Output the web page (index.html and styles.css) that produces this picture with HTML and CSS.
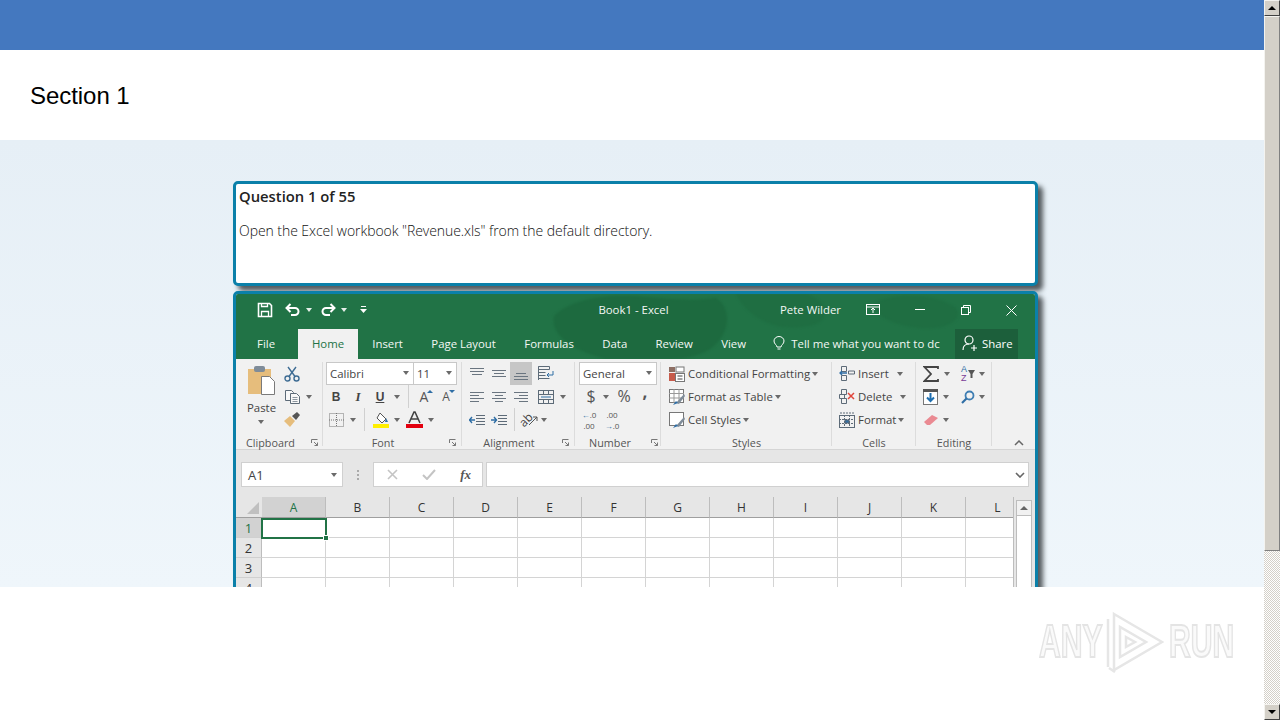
FILE: index.html
```html
<!DOCTYPE html>
<html lang="en">
<head>
<meta charset="utf-8">
<title>Section 1</title>
<link rel="stylesheet" href="styles.css">
</head>
<body>
<div class="page">
  <div class="content">
    <header class="topbar"></header>
    <div class="section-band"><h1 class="section-title">Section 1</h1></div>
    <main class="stage">
      <section class="card question">
        <h2 class="q-title">Question 1 of 55</h2>
        <p class="q-text">Open the Excel workbook "Revenue.xls" from the default directory.</p>
      </section>
      <section class="card excel">
        <div class="banner">
          <svg class="blobs" width="798" height="65" viewBox="0 0 798 65"><path d="M318 22c14-14 44-22 80-20 30 2 56 6 82 2 16 10 14 34-2 48-12 10-30 13-44 13h-64c-30-8-56-22-52-43z" fill="#1d6a3f"/><path d="M500 0h70c20 6 26 22 10 30-24 8-62 4-80-30z" fill="#1f6e42"/><path d="M640 8c24-10 60-8 80 6 8 12-10 22-36 20-24-2-48-12-44-26z" fill="#1f6e42"/></svg>
          <div class="titlebar">
            <div class="qat">
              <span class="tool w24"><svg width="16" height="16" viewBox="0 0 16 16" fill="none" stroke="#fff" stroke-width="1.6"><path d="M1.5 1.5h11l2 2v11h-13z"/><path d="M4.5 14.5v-5h7v5M4.5 1.5v3h6v-3" stroke-width="1.3"/></svg></span>
              <span class="tool w24 qat-gap"><svg width="16" height="14" viewBox="0 0 16 14" fill="none" stroke="#fff" stroke-width="2"><path d="M1.5 5h8.500a3.500 3.500 0 0 1 0 7H6"/><path d="M5.500 1 1.500 5l4 4"/></svg></span>
              <span class="w8 tool"><i class="caret white"></i></span>
              <span class="tool w24 qat-gap2"><svg width="16" height="14" viewBox="0 0 16 14" fill="none" stroke="#fff" stroke-width="2"><path d="M14.500 5H6a3.500 3.500 0 0 0 0 7h4"/><path d="M10.500 1l4 4-4 4"/></svg></span>
              <span class="w8 tool"><i class="caret white"></i></span>
              <span class="tool w12 qat-gap3"><svg width="7" height="8" viewBox="0 0 7 8" fill="#fff"><rect x="1" y="0" width="5" height="1"/><path d="M0 3h7L3.500 7z"/></svg></span>
            </div>
            <div class="doc-title">Book1 - Excel</div>
            <div class="user">Pete Wilder</div>
            <span class="tool w24 win"><svg width="14" height="12" viewBox="0 0 14 12" fill="none" stroke="#fff"><rect x=".5" y=".5" width="13" height="10"/><path d="M.5 3h13M7 9V4.500M5 6l2-2 2 2"/></svg></span>
            <span class="tool w46 win"><svg width="10" height="2" viewBox="0 0 10 2"><rect width="10" height="1" fill="#fff"/></svg></span>
            <span class="tool w46 win"><svg width="10" height="10" viewBox="0 0 10 10" fill="none" stroke="#fff"><rect x=".5" y="2.500" width="7" height="7"/><path d="M2.500 2.500v-2h7v7h-2"/></svg></span>
            <span class="tool w46 win"><svg width="11" height="11" viewBox="0 0 11 11" stroke="#fff"><path d="M.5.500l10 10M10.500.500l-10 10"/></svg></span>
          </div>
          <nav class="tabs">
            <span class="tab">File</span>
            <span class="tab active">Home</span>
            <span class="tab">Insert</span>
            <span class="tab">Page Layout</span>
            <span class="tab">Formulas</span>
            <span class="tab">Data</span>
            <span class="tab">Review</span>
            <span class="tab">View</span>
            <span class="tell"><svg width="12" height="15" viewBox="0 0 12 15" fill="none" stroke="#fff"><path d="M4 11c0-2-3-3-3-6a5 4.500 0 0 1 10 0c0 3-3 4-3 6zM4.500 13h3"/></svg><span class="tell-text">Tell me what you want to dc</span></span>
            <span class="share"><svg width="16" height="16" viewBox="0 0 16 16" fill="none" stroke="#fff" stroke-width="1.200"><circle cx="7" cy="5" r="4"/><path d="M1 15c0-4 2-6 6-6M9 13h6M12 10v6"/></svg>Share</span>
          </nav>
        </div>
        <div class="ribbon">
          <div class="group g-clip">
            <div class="g-body clip-body">
              <div class="paste">
                <svg width="30" height="30" viewBox="0 0 30 30"><rect x="1" y="4" width="23" height="25" fill="#e6bd7c"/><rect x="7" y="1" width="11" height="6" rx="2" fill="#7f8c99"/><path d="M14.500 11.500h8l5 5v13h-13z" fill="#fff" stroke="#7a7a7a"/></svg>
                <span class="paste-label">Paste</span>
                <i class="caret paste-caret"></i>
              </div>
              <div class="clip-tools">
                <span class="row"><span class="tool w22"><svg width="16" height="16" viewBox="0 0 16 16" fill="none" stroke="#3f6d94" stroke-width="1.400"><circle cx="3.500" cy="12.500" r="2.500"/><circle cx="12.500" cy="12.500" r="2.500"/><path d="M5 10.500 12 1M11 10.500 4 1"/></svg></span></span>
                <span class="row"><span class="tool w22"><svg width="15" height="14" viewBox="0 0 15 14" fill="#f8f8f8" stroke="#5d6b78"><path d="M.5.500h6l2 2v8h-8z"/><path d="M5.500 3.500h6l3 3v7h-9z"/><path d="M7.500 7.500h5M7.500 9.500h5M7.500 11.500h5" stroke-width=".7"/></svg></span><span class="tool w12"><i class="caret"></i></span></span>
                <span class="row"><span class="tool w22"><svg width="16" height="15" viewBox="0 0 16 15"><path d="M0 9l6-5 5 5-5 6z" fill="#e6bd7c"/><path d="M8 4l5-4 3 3-4 5z" fill="#555"/></svg></span></span>
              </div>
            </div>
            <div class="g-foot"><span class="g-label lab-clip">Clipboard</span><span class="launch"><svg width="7" height="7" viewBox="0 0 7 7" fill="none" stroke="#777"><path d="M.5 4V.500H6.500M6.500 6.500 3 3M3.500 6.500h3v-3"/></svg></span></div>
          </div>
          <div class="group g-font">
            <div class="g-body">
              <div class="row">
                <span class="sp3"></span>
                <span class="select w88">Calibri<i class="caret"></i></span>
                <span class="select w43">11<i class="caret"></i></span>
              </div>
              <div class="row">
                <span class="sp2"></span>
                <span class="tool w22 fmt bold">B</span>
                <span class="tool w22 fmt ital">I</span>
                <span class="tool w22 fmt under">U</span>
                <span class="tool w12"><i class="caret"></i></span>
                <span class="tool w10"><i class="vsep"></i></span>
                <span class="tool w22 grow">A<i class="tri up"></i></span>
                <span class="tool w22 shrink">A<i class="tri down"></i></span>
              </div>
              <div class="row">
                <span class="sp2"></span>
                <span class="tool w22"><svg width="15" height="14" viewBox="0 0 15 14" fill="none" stroke="#777" stroke-dasharray="1 1"><rect x=".5" y=".5" width="14" height="13"/><path d="M7.500 0v14M0 7h15"/></svg></span>
                <span class="tool w12"><i class="caret"></i></span>
                <span class="tool w10"><i class="vsep"></i></span>
                <span class="tool w22 gap1"><svg width="17" height="17" viewBox="0 0 17 17"><path d="M7 2l6 6-4 4-5-5z" fill="#fff" stroke="#555"/><path d="M13 7l2 4-3 0z" fill="#2f6ea5"/><rect x="0" y="13" width="16" height="4" fill="#ffef00"/></svg></span>
                <span class="tool w10"><i class="caret"></i></span>
                <span class="tool w22 gap1"><svg width="17" height="17" viewBox="0 0 17 17"><path d="M3 12 8 1h1l5 11M5 8h7" fill="none" stroke="#444" stroke-width="1.600"/><rect y="13" width="17" height="4" fill="#e3000f"/></svg></span>
                <span class="tool w12"><i class="caret"></i></span>
              </div>
            </div>
            <div class="g-foot"><span class="g-label lab-font">Font</span><span class="launch"><svg width="7" height="7" viewBox="0 0 7 7" fill="none" stroke="#777"><path d="M.5 4V.500H6.500M6.500 6.500 3 3M3.500 6.500h3v-3"/></svg></span></div>
          </div>
          <div class="group g-align">
            <div class="g-body">
              <div class="row">
                <span class="sp4"></span>
                <span class="tool w22"><svg class="lines" width="14" height="12" viewBox="0 0 14 12"><path d="M0 .5h14M0 3.500h14M2 6.500h10"/></svg></span>
                <span class="tool w22"><svg class="lines" width="14" height="10" viewBox="0 0 14 10"><path d="M0 1.500h14M2 4.500h10M0 7.500h14"/></svg></span>
                <span class="tool w22 pressed"><svg class="lines" width="14" height="12" viewBox="0 0 14 12"><path d="M2 5.500h10M0 8.500h14M0 11.500h14"/></svg></span>
                <span class="sp3"></span>
                <span class="tool w22"><svg width="16" height="15" viewBox="0 0 16 15" fill="none" stroke="#5d6b78"><path d="M.5.500h11v3H.5zM.5 6.500h7M.5 9.500h7M.5 12.500h11M.5 14V.500"/><path d="M15 5v4H9M11 7 9 9l2 2" stroke="#2f6ea5"/></svg></span>
              </div>
              <div class="row">
                <span class="sp4"></span>
                <span class="tool w22"><svg class="lines" width="14" height="10" viewBox="0 0 14 10"><path d="M0 .5h14M0 3.500h9M0 6.500h14M0 9.500h9"/></svg></span>
                <span class="tool w22"><svg class="lines" width="14" height="10" viewBox="0 0 14 10"><path d="M0 .5h14M3 3.500h8M0 6.500h14M3 9.500h8"/></svg></span>
                <span class="tool w22"><svg class="lines" width="14" height="10" viewBox="0 0 14 10"><path d="M0 .5h14M5 3.500h9M0 6.500h14M5 9.500h9"/></svg></span>
                <span class="sp3"></span>
                <span class="tool w22"><svg width="16" height="14" viewBox="0 0 16 14" fill="none" stroke="#5d6b78"><rect x=".5" y=".5" width="15" height="13"/><path d="M0 4.500h16M0 9.500h16M5.500 0v4M10.500 0v4M5.500 10v4M10.500 10v4"/><path d="M3 7h10" stroke="#2f6ea5"/></svg></span>
                <span class="tool w12"><i class="caret"></i></span>
              </div>
              <div class="row">
                <span class="sp4"></span>
                <span class="tool w22"><svg width="16" height="10" viewBox="0 0 16 10" fill="none" stroke="#5d6b78"><path d="M7 .5h9M7 3.500h9M7 6.500h9M7 9.500h9"/><path d="M6 5H0M3 2 .5 5 3 8" stroke="#2f6ea5" stroke-width="1.400"/></svg></span>
                <span class="tool w22"><svg width="16" height="10" viewBox="0 0 16 10" fill="none" stroke="#5d6b78"><path d="M7 .5h9M7 3.500h9M7 6.500h9M7 9.500h9"/><path d="M0 5h6M3 2l2.500 3L3 8" stroke="#2f6ea5" stroke-width="1.400"/></svg></span>
                <span class="tool w8"><i class="vsep"></i></span>
                <span class="tool w22 orient"><span class="ab">ab</span><svg class="ab-arrow" width="9" height="9" viewBox="0 0 9 9" fill="none" stroke="#555"><path d="M0 9l8-8M4 1h4v4"/></svg></span>
                <span class="tool w8"><i class="caret"></i></span>
              </div>
            </div>
            <div class="g-foot"><span class="g-label lab-align">Alignment</span><span class="launch"><svg width="7" height="7" viewBox="0 0 7 7" fill="none" stroke="#777"><path d="M.5 4V.500H6.500M6.500 6.500 3 3M3.500 6.500h3v-3"/></svg></span></div>
          </div>
          <div class="group g-num">
            <div class="g-body">
              <div class="row"><span class="sp4"></span><span class="select w78">General<i class="caret"></i></span></div>
              <div class="row">
                <span class="sp5"></span>
                <span class="tool w22 sym">$</span>
                <span class="tool w8"><i class="caret"></i></span>
                <span class="sp3"></span>
                <span class="tool w22 sym">%</span>
                <span class="tool w20 comma">,</span>
              </div>
              <div class="row">
                <span class="sp3"></span>
                <span class="tool w22 dec"><span class="dec-l"><b class="arr">←</b>.0</span><span class="dec-l">.00</span></span>
                <span class="sp1"></span>
                <span class="tool w22 dec"><span class="dec-l">.00</span><span class="dec-l"><b class="arr">→</b>.0</span></span>
              </div>
            </div>
            <div class="g-foot"><span class="g-label lab-num">Number</span><span class="launch"><svg width="7" height="7" viewBox="0 0 7 7" fill="none" stroke="#777"><path d="M.5 4V.500H6.500M6.500 6.500 3 3M3.500 6.500h3v-3"/></svg></span></div>
          </div>
          <div class="group g-styles">
            <div class="g-body">
              <div class="row lbl-row"><span class="tool w20"><svg width="16" height="16" viewBox="0 0 16 16"><rect x="0" y="1" width="6" height="5" fill="#8d6e63"/><rect y="7" width="6" height="8" fill="#c75b4b"/><rect x="7" y="1" width="8" height="5" fill="#fff" stroke="#777"/><rect x="6.500" y="7.500" width="9" height="8" fill="#fff" stroke="#777"/><path d="M8.500 10h5M8.500 13h5" stroke="#444"/></svg></span><span class="rb-text">Conditional Formatting</span><i class="caret mini"></i></div>
              <div class="row lbl-row"><span class="tool w20"><svg width="16" height="16" viewBox="0 0 16 16"><rect x=".5" y=".5" width="14" height="13" fill="#fff" stroke="#777"/><path d="M0 4.500h15M5 0v14M10 0v14M0 9h15" stroke="#999"/><path d="M7 14 15 5l1 2-6 8z" fill="#7f8c99"/><path d="M4 16l3-4 2 2z" fill="#2f6ea5"/></svg></span><span class="rb-text">Format as Table</span><i class="caret mini"></i></div>
              <div class="row lbl-row"><span class="tool w20"><svg width="16" height="16" viewBox="0 0 16 16"><rect x=".5" y=".5" width="14" height="13" fill="#fff" stroke="#777"/><path d="M7 14 15 5l1 2-6 8z" fill="#7f8c99"/><path d="M4 16l3-4 2 2z" fill="#2f6ea5"/></svg></span><span class="rb-text">Cell Styles</span><i class="caret mini"></i></div>
            </div>
            <div class="g-foot"><span class="g-label lab-full">Styles</span></div>
          </div>
          <div class="group g-cells">
            <div class="g-body">
              <div class="row lbl-row"><span class="tool w20"><svg width="16" height="15" viewBox="0 0 16 15" fill="none" stroke="#5d6b78"><path d="M2.500.5h5v5h-5zM2.500 9.500h5v5h-5zM9.500 5h6v3h-6z"/><path d="M8 7H1M3 5 1 7l2 2" stroke="#2f6ea5" stroke-width="1.300"/></svg></span><span class="rb-text">Insert</span><span class="tool w14 cell-car1"><i class="caret"></i></span></div>
              <div class="row lbl-row"><span class="tool w20"><svg width="16" height="15" viewBox="0 0 16 15" fill="none" stroke="#5d6b78"><path d="M2.500.5h5v5h-5zM.5 5.500h5v4h-5zM2.500 9.500h5v5h-5z"/><path d="M9 4l6 6M15 4l-6 6" stroke="#e0463c" stroke-width="1.500"/></svg></span><span class="rb-text">Delete</span><span class="tool w14 cell-car2"><i class="caret"></i></span></div>
              <div class="row lbl-row"><span class="tool w20"><svg width="16" height="16" viewBox="0 0 16 16" fill="none" stroke="#5d6b78"><rect x=".5" y="3.500" width="15" height="12"/><path d="M0 7.500h16M0 11.500h16M5.500 3v13M10.500 3v13M1 1h14" stroke-dasharray="2 1"/><rect x="6" y="8" width="4" height="3" fill="#2f6ea5"/></svg></span><span class="rb-text">Format</span><i class="caret mini"></i></div>
            </div>
            <div class="g-foot"><span class="g-label lab-full">Cells</span></div>
          </div>
          <div class="group g-edit">
            <div class="g-body">
              <div class="row"><span class="sp5"></span><span class="tool w20"><svg width="16" height="16" viewBox="0 0 16 16" fill="none" stroke="#444" stroke-width="1.800"><path d="M15 3V1H1.500L8 8l-6.500 7H15v-2"/></svg></span><span class="tool w12"><i class="caret"></i></span><span class="sp6"></span><span class="tool w18 sort"><span class="az"><b class="az-a">A</b><b class="az-z">Z</b></span><svg width="7" height="8" viewBox="0 0 7 8"><path d="M0 0h7L4.500 4v4h-2V4z" fill="#555"/></svg></span><span class="tool w10"><i class="caret"></i></span></div>
              <div class="row"><span class="sp5"></span><span class="tool w20"><svg width="16" height="16" viewBox="0 0 16 16"><rect x=".5" y=".5" width="14" height="15" fill="#fff" stroke="#777"/><rect width="15" height="3" fill="#555"/><path d="M7.500 4v8M4 8.500l3.500 3.500L11 8.500" fill="none" stroke="#1f6fb0" stroke-width="2"/></svg></span><span class="tool w10"><i class="caret"></i></span><span class="sp8"></span><span class="tool w18"><svg width="14" height="14" viewBox="0 0 14 14" fill="none"><circle cx="8.500" cy="5.500" r="4" stroke="#3f7eb3" stroke-width="1.800"/><path d="M5.500 8.500 1 13" stroke="#2f6ea5" stroke-width="2.200"/></svg></span><span class="tool w10"><i class="caret"></i></span></div>
              <div class="row"><span class="sp5"></span><span class="tool w20"><svg width="15" height="12" viewBox="0 0 15 12"><path d="M0 8l8-7 6 3-8 7H3z" fill="#ea8a92"/></svg></span><span class="tool w10"><i class="caret"></i></span></div>
            </div>
            <div class="g-foot"><span class="g-label lab-full">Editing</span></div>
          </div>
          <div class="collapse"><svg width="10" height="6" viewBox="0 0 10 6" fill="none" stroke="#666" stroke-width="1.500"><path d="M1 5l4-4 4 4"/></svg></div>
        </div>
        <div class="fbar">
          <div class="namebox">A1<i class="caret"></i></div>
          <div class="fdots"><i></i><i></i><i></i></div>
          <div class="fbtns">
            <svg width="11" height="11" viewBox="0 0 11 11" stroke="#c4c4c4" stroke-width="1.600"><path d="M1 1l9 9M10 1l-9 9"/></svg>
            <svg width="14" height="11" viewBox="0 0 14 11" fill="none" stroke="#c4c4c4" stroke-width="2"><path d="M1 6l4 4 8-9"/></svg>
            <span class="fx">fx</span>
          </div>
          <div class="finput"><svg width="10" height="6" viewBox="0 0 10 6" fill="none" stroke="#666" stroke-width="1.600"><path d="M1 1l4 4 4-4"/></svg></div>
        </div>
        <div class="sheet">
          <div class="sheet-grid">
            <div class="corner"><i></i></div>
            <div class="ch sel">A</div><div class="ch">B</div><div class="ch">C</div><div class="ch">D</div><div class="ch">E</div><div class="ch">F</div><div class="ch">G</div><div class="ch">H</div><div class="ch">I</div><div class="ch">J</div><div class="ch">K</div><div class="ch">L</div>
            <div class="rh sel">1</div><div class="c active-cell"><i class="handle"></i></div><div class="c"></div><div class="c"></div><div class="c"></div><div class="c"></div><div class="c"></div><div class="c"></div><div class="c"></div><div class="c"></div><div class="c"></div><div class="c"></div><div class="c"></div>
            <div class="rh">2</div><div class="c"></div><div class="c"></div><div class="c"></div><div class="c"></div><div class="c"></div><div class="c"></div><div class="c"></div><div class="c"></div><div class="c"></div><div class="c"></div><div class="c"></div><div class="c"></div>
            <div class="rh">3</div><div class="c"></div><div class="c"></div><div class="c"></div><div class="c"></div><div class="c"></div><div class="c"></div><div class="c"></div><div class="c"></div><div class="c"></div><div class="c"></div><div class="c"></div><div class="c"></div>
            <div class="rh">4</div><div class="c"></div><div class="c"></div><div class="c"></div><div class="c"></div><div class="c"></div><div class="c"></div><div class="c"></div><div class="c"></div><div class="c"></div><div class="c"></div><div class="c"></div><div class="c"></div>
          </div>
          <div class="vscroll"><div class="vs-up"><i class="tri-up"></i></div></div>
        </div>
      </section>
    </main>
    <div class="foot-band">
      <div class="watermark" aria-label="ANY RUN">
        <span class="wm-text wm-any">ANY</span>
        <svg class="wm-logo" width="58" height="62" viewBox="0 0 58 62" fill="none" stroke="#e6e6e6" stroke-width="2.500"><path d="M2 8v48M8 3l48 28L8 59zM14 16v30l26-15zM3 57l6 4M20 26v10l9-5z"/></svg>
        <span class="wm-text wm-run">RUN</span>
      </div>
    </div>
  </div>
  <aside class="scrollbar">
    <div class="sb-btn"><i class="sb-up"></i></div>
    <div class="sb-thumb"></div>
    <div class="sb-track"></div>
    <div class="sb-btn"><i class="sb-down"></i></div>
  </aside>
</div>
</body>
</html>
```
FILE: styles.css
```css
*{box-sizing:border-box}
html,body{margin:0;padding:0;height:720px;overflow:hidden;background:#fff}
body{font-family:"Open Sans","Noto Sans",sans-serif}
.page{display:flex;width:1280px;height:720px}
.content{width:1264px;display:flex;flex-direction:column}
.topbar{height:50px;background:#4478bf;flex:none}
.section-band{height:90px;flex:none;background:#fff;display:flex;align-items:center;padding-left:30px}
.section-title{margin:0;font:400 24px/28px "Liberation Sans",Arial,sans-serif;color:#000;letter-spacing:-.05px;padding-top:1px}
.stage{height:447px;flex:none;overflow:hidden;background:linear-gradient(#e6eff6,#eff6fb);padding:41px 0 0 233px}
.card{width:805px;border:3px solid #0b80a9;border-radius:5px;box-shadow:5px 5px 5px #555c60;background:#fff}
.question{height:105px;padding:2px 0 0 3px;color:#111}
.q-title{margin:0;font:600 14.800px/20px "Open Sans",sans-serif;color:#222}
.q-text{margin:15px 0 0;font:300 14px/20px "Open Sans",sans-serif;color:#111;letter-spacing:-.06px}
.excel{margin-top:5px;height:320px;overflow:hidden;background:#e6e6e6;border-radius:5px 5px 0 0;font-size:11.400px;color:#444}

.banner{position:relative;height:65px;background:#217346;overflow:hidden}
.blobs{position:absolute;left:0;top:0;filter:blur(1px)}
.titlebar{position:relative;height:35px;color:#fff;display:flex;align-items:center;padding:0 0 3px 17px}
.qat{display:flex;align-items:center;width:313px}
.qat-gap{margin-left:4px}
.qat-gap2{margin-left:3px}
.qat-gap3{margin-left:9px}
.doc-title{width:139px;text-align:center;font-size:11.400px;color:#f3f7f4;margin-left:-2px;padding-bottom:1px}
.user{margin-left:77px;width:82px;font-size:11.400px;color:#f3f7f4;padding-bottom:1px}
.win{height:32px}
.win.w24{margin-left:-1px}
.win.w24+.win.w46{margin-left:12px}
.win:last-child{width:46px;margin-left:-1px}

.tabs{position:relative;height:30px;display:flex;align-items:stretch;color:#f3f7f4;font-size:11.400px}
.tab{display:flex;align-items:center;padding:0 14.200px 2px;white-space:nowrap}
.tab:first-child{padding-left:21px;padding-right:23px}
.tab.active{background:#f1f1f1;color:#217346;padding:0 14px 2px 14px;width:60px;justify-content:center}
.tell{display:flex;align-items:center;gap:6px;margin-left:13px;padding-bottom:2px;width:172px;flex:none}
.tell-text{white-space:nowrap}
.share{position:absolute;left:719px;top:0;bottom:0;width:63px;background:#1c5f3b;display:flex;align-items:center;gap:4px;padding:0 0 2px 7px;color:#fff}

.ribbon{height:91px;background:#f1f1f1;display:flex;border-bottom:1px solid #d5d5d5;font-size:11.400px;color:#444}
.group{display:flex;flex-direction:column;position:relative;flex:none}
.group::after{content:"";position:absolute;right:0;top:3px;bottom:3px;width:1px;background:#dcdcdc}
.g-clip{width:87px}
.g-font{width:139px}
.g-align{width:113px}
.g-num{width:86px}
.g-styles{width:171px}
.g-cells{width:84px}
.g-edit{width:76px}
.g-body{height:75px;padding-top:3px;flex:none}
.g-foot{height:15px;display:flex;align-items:center;font-size:11px;color:#555;flex:none;padding-top:1px}
.g-label{text-align:center;white-space:nowrap;font-size:10.800px}
.lab-clip{width:69px}
.lab-font{width:120px}
.lab-align{width:94px}
.lab-num{width:70px}
.lab-full{width:100%}
.launch{display:flex;margin-left:6px}
.row{display:flex;align-items:center;height:23px}
.tool{display:flex;align-items:center;justify-content:center;height:23px;flex:none}
.w8{width:8px}.w10{width:10px}.w12{width:12px}.w14{width:14px}.w18{width:18px}.w20{width:20px}.w22{width:22px}.w24{width:24px}.w46{width:46px}.w43{width:43px}.w78{width:78px}.w88{width:88px}
.sp1{width:1px}.sp2{width:2px}.sp3{width:3px}.sp4{width:4px}.sp5{width:5px}.sp6{width:6px}.sp8{width:8px}
.gap1{margin-left:1px}
.caret{display:block;width:0;height:0;border:3px solid transparent;border-top:4px solid #6a6a6a;border-bottom:0}
.caret.white{border-top-color:#e6efe9}
.caret.mini{margin-left:2px}
.clip-body{display:flex}
.paste{width:45px;padding-left:11px;display:flex;flex-direction:column;align-items:flex-start;position:relative}
.paste svg{margin-top:3px}
.paste-label{margin:4px 0 0 0;font-size:11.400px;line-height:17px;color:#444}
.paste-caret{margin:4px 0 0 11px}
.clip-tools{display:flex;flex-direction:column}
.select{display:flex;align-items:center;justify-content:space-between;height:23px;background:#fff;border:1px solid #c8c8c8;padding:0 4px 1px 3px;font-size:11.400px;color:#444;flex:none}
.select+.select{border-left:0}
.fmt{font:700 12px "Liberation Sans",sans-serif;color:#444}
.ital{font:italic 700 13px "Liberation Serif",serif}
.under{text-decoration:underline}
.vsep{display:block;width:1px;height:23px;background:#d0d0d0}
.grow,.shrink{position:relative;font:400 14px "Open Sans",sans-serif;color:#555}
.shrink{font-size:12px}
.tri{position:absolute;right:2px;width:0;height:0;border-left:3px solid transparent;border-right:3px solid transparent}
.tri.up{top:5px;border-bottom:3px solid #2f6ea5}
.tri.down{top:5px;border-top:3px solid #2f6ea5}
.lines{stroke:#6a7580;fill:none}
.pressed{background:#c6c6c6}
.orient{position:relative}
.ab{font:400 12px/12px "Open Sans",sans-serif;color:#444;transform:rotate(-45deg);margin-right:6px}
.ab-arrow{position:absolute;right:2px;top:8px}
.sym{font-size:16px;color:#555;padding-bottom:2px}
.comma{font-weight:700;font-size:17px;color:#555;padding-bottom:10px}
.dec{flex-direction:column;font:400 8px/11px "Open Sans",sans-serif;color:#555}
.dec-l{display:block;height:11px;white-space:nowrap}
.arr{color:#2f6ea5;font-weight:400}
.lbl-row{padding-left:6px}
.rb-text{margin-left:1px;white-space:nowrap;font-size:11.400px;color:#444;padding-bottom:1px}
.g-cells .lbl-row{padding-left:5px}
.cell-car1{margin-left:4px}
.cell-car2{margin-left:4px}
.az{display:flex;flex-direction:column;font:700 9px/9px "Liberation Sans",sans-serif;margin-right:1px}
.az-a{color:#2f6ea5;font-weight:400}
.az-z{color:#7a3b97;font-weight:400}
.collapse{width:42px;display:flex;align-items:flex-end;justify-content:center;padding:0 0 3px 12px}

.fbar{height:47px;background:#e6e6e6;display:flex;padding:12px 0 0 5px}
.namebox{width:102px;height:25px;background:#fff;border:1px solid #d0d0d0;display:flex;align-items:center;justify-content:space-between;padding:0 5px 0 6px;font-size:13px;color:#444}
.fdots{width:30px;height:25px;display:flex;flex-direction:column;align-items:center;justify-content:center;gap:2px}
.fdots i{width:2px;height:2px;background:#aaa;display:block}
.fbtns{width:110px;height:25px;background:#fff;border:1px solid #d0d0d0;display:flex;align-items:center;justify-content:space-between;padding:0 11px 0 13px}
.fx{font:italic 700 13px "Liberation Serif",serif;color:#555}
.finput{width:543px;height:25px;margin-left:3px;background:#fff;border:1px solid #d0d0d0;display:flex;align-items:center;justify-content:flex-end;padding-right:3px}

.sheet{display:flex;height:90px}
.sheet-grid{width:778px;height:90px;overflow:hidden;display:grid;grid-template-columns:26px repeat(12,64px);grid-template-rows:21px repeat(4,20px);background:#fff;flex:none;font-size:13px;border-right:1px solid #bdbdbd}
.corner{background:#e6e6e6;border-bottom:1px solid #9f9f9f;position:relative;display:flex;align-items:flex-end;justify-content:flex-end;padding:0 3px 3px 0}
.corner i{display:block;width:0;height:0;border-style:solid;border-width:0 0 12px 12px;border-color:transparent transparent #c0c0c0 transparent}
.ch{background:#e6e6e6;border-right:1px solid #bdbdbd;border-bottom:1px solid #9f9f9f;display:flex;align-items:center;justify-content:center;color:#333;font-size:12px}
.ch.sel{background:#d2d2d2;color:#217346}
.rh{background:#e6e6e6;border-right:1px solid #bdbdbd;border-bottom:1px solid #d0d0d0;display:flex;align-items:center;justify-content:center;color:#333;font-size:13px}
.rh.sel{background:#d2d2d2;color:#217346}
.c{border-right:1px solid #d4d4d4;border-bottom:1px solid #d4d4d4}
.active-cell{position:relative;border:2px solid #217346;margin:0 -1px -1px -1px;z-index:1}
.handle{position:absolute;right:-4px;bottom:-4px;width:6px;height:6px;background:#217346;border:1px solid #fff}
.vscroll{width:16px;margin:3px 0 0 2px;background:#fff;border-left:1px solid #bdbdbd;border-right:1px solid #bdbdbd;flex:none}
.vs-up{height:16px;border:1px solid #bdbdbd;border-width:1px 0;display:flex;align-items:center;justify-content:center;background:#f1f1f1}
.tri-up{display:block;width:0;height:0;border:4px solid transparent;border-bottom:4px solid #666;border-top:0}

.foot-band{flex:1;background:#fff;position:relative}
.watermark{position:absolute;left:1036px;top:22px;display:flex;align-items:center;width:200px;height:66px}
.wm-text{font:700 47px/47px "Liberation Sans",sans-serif;color:#fafafa;-webkit-text-stroke:2px #e4e4e4;transform-origin:left center;transform:scaleX(.64);width:64px;display:block;white-space:nowrap;filter:blur(.6px);margin-top:-4px}
.wm-any{margin-left:3px}
.wm-logo{flex:none;margin-left:3px;filter:blur(.6px)}
.wm-run{margin-left:5px}

.scrollbar{width:16px;display:flex;flex-direction:column;flex:none}
.sb-btn{height:16px;flex:none;background:#d4d0c8;border:1px solid;border-color:#f4f3ef #404040 #404040 #f4f3ef;display:flex;align-items:center;justify-content:center}
.sb-up{display:block;width:0;height:0;border:4px solid transparent;border-bottom:4px solid #000;border-top:0}
.sb-down{display:block;width:0;height:0;border:4px solid transparent;border-top:4px solid #000;border-bottom:0}
.sb-thumb{height:535px;flex:none;background:#d4d0c8;border:1px solid;border-color:#f4f3ef #808080 #808080 #f4f3ef}
.sb-track{flex:1;background-color:#fff;background-image:repeating-conic-gradient(#d4d0c8 0 25%,#fff 0 50%);background-size:2px 2px}
```
